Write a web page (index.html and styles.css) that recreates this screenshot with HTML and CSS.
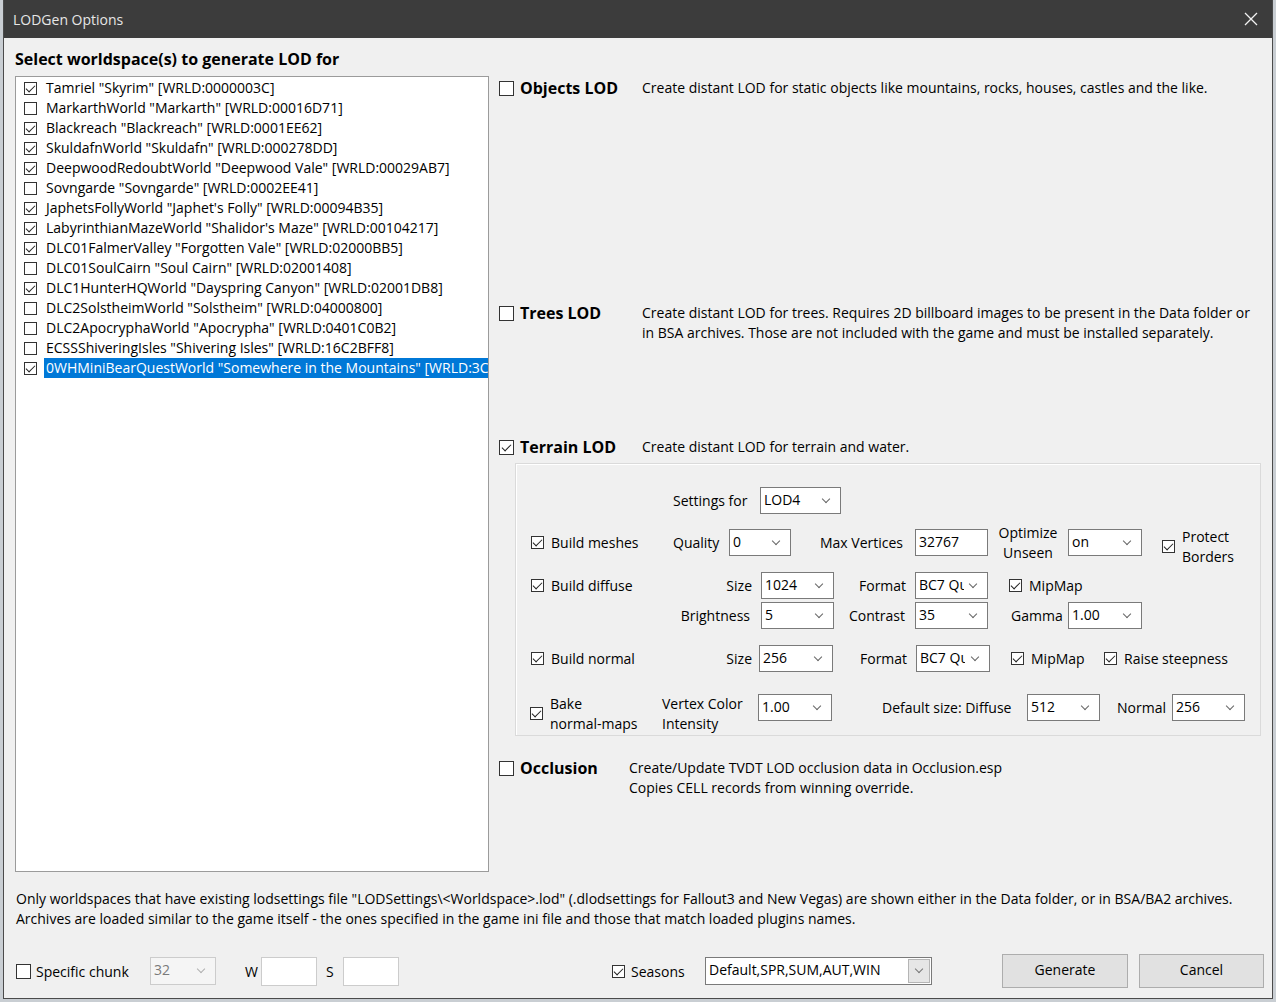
FILE: index.html
```html
<!DOCTYPE html>
<html lang="en">
<head>
    <meta charset="UTF-8">
    <title>LODGen Options</title>
    <link rel="stylesheet" href="styles.css">
</head>
<body>
<div class="window">
    <div class="titlebar">
        <span class="title">LODGen Options</span>
        <svg class="close" width="14" height="14" viewBox="0 0 14 14"><path d="M1 1 L13 13 M13 1 L1 13" stroke="#f2f2f2" stroke-width="1.3"/></svg>
    </div>

    <div class="content">
        <h1 class="heading">Select worldspace(s) to generate LOD for</h1>

        <div class="main">
            <div class="worldlist">
                <div class="item"><span class="cb on"></span><span class="name">Tamriel "Skyrim" [WRLD:0000003C]</span></div>
                <div class="item"><span class="cb"></span><span class="name">MarkarthWorld "Markarth" [WRLD:00016D71]</span></div>
                <div class="item"><span class="cb on"></span><span class="name">Blackreach "Blackreach" [WRLD:0001EE62]</span></div>
                <div class="item"><span class="cb on"></span><span class="name">SkuldafnWorld "Skuldafn" [WRLD:000278DD]</span></div>
                <div class="item"><span class="cb on"></span><span class="name">DeepwoodRedoubtWorld "Deepwood Vale" [WRLD:00029AB7]</span></div>
                <div class="item"><span class="cb"></span><span class="name">Sovngarde "Sovngarde" [WRLD:0002EE41]</span></div>
                <div class="item"><span class="cb on"></span><span class="name">JaphetsFollyWorld "Japhet's Folly" [WRLD:00094B35]</span></div>
                <div class="item"><span class="cb on"></span><span class="name">LabyrinthianMazeWorld "Shalidor's Maze" [WRLD:00104217]</span></div>
                <div class="item"><span class="cb on"></span><span class="name">DLC01FalmerValley "Forgotten Vale" [WRLD:02000BB5]</span></div>
                <div class="item"><span class="cb"></span><span class="name">DLC01SoulCairn "Soul Cairn" [WRLD:02001408]</span></div>
                <div class="item"><span class="cb on"></span><span class="name">DLC1HunterHQWorld "Dayspring Canyon" [WRLD:02001DB8]</span></div>
                <div class="item"><span class="cb"></span><span class="name">DLC2SolstheimWorld "Solstheim" [WRLD:04000800]</span></div>
                <div class="item"><span class="cb"></span><span class="name">DLC2ApocryphaWorld "Apocrypha" [WRLD:0401C0B2]</span></div>
                <div class="item"><span class="cb"></span><span class="name">ECSSShiveringIsles "Shivering Isles" [WRLD:16C2BFF8]</span></div>
                <div class="item"><span class="cb on"></span><span class="name selected">0WHMiniBearQuestWorld "Somewhere in the Mountains" [WRLD:3C000D62]</span></div>
            </div>

            <div class="options">
                <div class="section sec-objects">
                    <span class="cb big"></span>
                    <span class="sec-label">Objects LOD</span>
                    <p class="desc">Create distant LOD for static objects like mountains, rocks, houses, castles and the like.</p>
                </div>

                <div class="section sec-trees">
                    <span class="cb big"></span>
                    <span class="sec-label">Trees LOD</span>
                    <p class="desc">Create distant LOD for trees. Requires 2D billboard images to be present in the Data folder or in BSA archives. Those are not included with the game and must be installed separately.</p>
                </div>

                <div class="section sec-terrain">
                    <span class="cb big on"></span>
                    <span class="sec-label">Terrain LOD</span>
                    <p class="desc">Create distant LOD for terrain and water.</p>
                </div>

                <div class="terrain-panel">
                    <div class="row row0">
                        <span></span>
                        <span class="lbl">Settings for</span>
                        <div class="sel"><span class="val">LOD4</span></div>
                    </div>

                    <div class="row row1">
                        <span></span>
                        <label class="check"><span class="cb on"></span>Build meshes</label>
                        <span class="lbl">Quality</span>
                        <div class="sel"><span class="val">0</span></div>
                        <span></span>
                        <span class="lbl">Max Vertices</span>
                        <div class="field">32767</div>
                        <span class="lbl two center">Optimize<br>Unseen</span>
                        <div class="sel"><span class="val">on</span></div>
                        <span></span>
                        <label class="check lower"><span class="cb on"></span><span class="two">Protect<br>Borders</span></label>
                    </div>

                    <div class="row row2">
                        <span></span>
                        <label class="check"><span class="cb on"></span>Build diffuse</label>
                        <span class="lbl right">Size</span>
                        <div class="sel"><span class="val">1024</span></div>
                        <span></span>
                        <span class="lbl">Format</span>
                        <div class="sel"><span class="val clip">BC7 Quality</span></div>
                        <span></span>
                        <label class="check"><span class="cb on"></span>MipMap</label>
                    </div>

                    <div class="row row3">
                        <span></span>
                        <span></span>
                        <span class="lbl right">Brightness</span>
                        <div class="sel"><span class="val">5</span></div>
                        <span></span>
                        <span class="lbl">Contrast</span>
                        <div class="sel"><span class="val">35</span></div>
                        <span></span>
                        <span class="lbl">Gamma</span>
                        <div class="sel"><span class="val">1.00</span></div>
                    </div>

                    <div class="row row4">
                        <span></span>
                        <label class="check"><span class="cb on"></span>Build normal</label>
                        <span class="lbl right">Size</span>
                        <div class="sel"><span class="val">256</span></div>
                        <span></span>
                        <span class="lbl">Format</span>
                        <div class="sel"><span class="val clip">BC7 Quality</span></div>
                        <span></span>
                        <label class="check"><span class="cb on"></span>MipMap</label>
                        <label class="check"><span class="cb on"></span>Raise steepness</label>
                    </div>

                    <div class="row row5">
                        <span></span>
                        <label class="check low"><span class="cb on"></span><span class="two">Bake<br>normal-maps</span></label>
                        <span class="lbl two low">Vertex Color<br>Intensity</span>
                        <div class="sel"><span class="val">1.00</span></div>
                        <span></span>
                        <span class="lbl">Default size: Diffuse</span>
                        <div class="sel"><span class="val">512</span></div>
                        <span></span>
                        <span class="lbl">Normal</span>
                        <div class="sel"><span class="val">256</span></div>
                    </div>
                </div>

                <div class="section sec-occlusion">
                    <span class="cb big"></span>
                    <span class="sec-label">Occlusion</span>
                    <p class="desc">Create/Update TVDT LOD occlusion data in Occlusion.esp<br>Copies CELL records from winning override.</p>
                </div>
            </div>
        </div>

        <p class="note">Only worldspaces that have existing lodsettings file "LODSettings\&lt;Worldspace&gt;.lod" (.dlodsettings for Fallout3 and New Vegas) are shown either in the Data folder, or in BSA/BA2 archives.<br>Archives are loaded similar to the game itself - the ones specified in the game ini file and those that match loaded plugins names.</p>

        <div class="bottombar">
            <label class="check chunk"><span class="cb big"></span>Specific chunk</label>
            <div class="sel disabled chunk-size"><span class="val">32</span></div>
            <span class="coord">W</span>
            <div class="field light"></div>
            <span class="coord coord-s">S</span>
            <div class="field light"></div>
            <label class="check seasons"><span class="cb on"></span>Seasons</label>
            <div class="combo">
                <span class="val">Default,SPR,SUM,AUT,WIN</span>
                <span class="combo-btn"></span>
            </div>
            <button class="btn generate">Generate</button>
            <button class="btn cancel">Cancel</button>
        </div>
    </div>
</div>
</body>
</html>
```

FILE: styles.css
```css
body {
    margin: 0;
    background: #c9ced3;
    font-family: "Open Sans", "Noto Sans", sans-serif;
    font-size: 14px;
    color: #000;
}

.window {
    margin-left: 3px;
    width: 1270px;
    height: 999px;
    box-sizing: border-box;
    background: #f0f0f0;
    border: 1px solid #4b4b4b;
    border-top: none;
}

.titlebar {
    height: 38px;
    background: #3c3c3c;
    display: flex;
    align-items: center;
    justify-content: space-between;
    padding: 0 14px 0 9px;
}
.title { color: #e6e6e6; font-size: 14px; }

.content { padding: 0 0 0 11px; }

.heading {
    margin: 10px 0 6px;
    font-size: 16px;
    line-height: 22px;
    font-weight: 700;
}

.main { display: flex; gap: 8px; height: 796px; }

/* world list */
.worldlist {
    width: 474px;
    flex: none;
    box-sizing: border-box;
    background: #fff;
    border: 1px solid #9b9b9b;
    padding-top: 1px;
    overflow: hidden;
}
.item { display: flex; align-items: center; height: 20px; }
.item .cb { margin-left: 8px; flex: none; }
.name {
    margin-left: 7px;
    padding-left: 2px;
    flex: 1;
    line-height: 20px;
    white-space: nowrap;
    overflow: hidden;
}
.name.selected { background: #0078d7; color: #fff; }

/* checkboxes */
.cb {
    display: inline-block;
    position: relative;
    width: 13px;
    height: 13px;
    box-sizing: border-box;
    border: 1px solid #333;
    background: #fff;
    flex: none;
}
.cb.big { width: 15px; height: 15px; }
.cb.on::after {
    content: '';
    position: absolute;
    left: 3px;
    top: 0px;
    width: 4px;
    height: 8px;
    border: solid #222;
    border-width: 0 1px 1px 0;
    transform: rotate(45deg);
}
.cb.big.on::after { left: 4px; top: 1px; }

.check { display: flex; align-items: center; gap: 7px; white-space: nowrap; }
.two { line-height: 20px; }

/* right side */
.options { flex: 1; display: flex; flex-direction: column; }

.section { display: flex; align-items: flex-start; }
.section .cb { margin: 5px 6px 0 2px; }
.sec-label {
    width: 122px;
    font-weight: 700;
    font-size: 16px;
    line-height: 24px;
    flex: none;
}
.desc { margin: 2px 0 0; line-height: 20px; padding-right: 10px; }

.sec-trees { margin-top: 201px; }
.sec-terrain { margin-top: 92px; }
.sec-occlusion { margin-top: 20px; }
.sec-occlusion .sec-label { width: 109px; }

.terrain-panel {
    margin: 4px 0 0 18px;
    width: 746px;
    height: 273px;
    box-sizing: border-box;
    border: 1px solid #dadada;
    box-shadow: inset 1px 1px 0 #fff;
    padding-top: 23px;
}

.row { display: grid; grid-template-rows: 27px; height: 27px; align-items: center; }
.row0 { grid-template-columns: 157px 87px 81px; }
.row1 { margin-top: 15px; grid-template-columns: 15px 142px 56px 62px 29px 95px 73px 80px 74px 20px auto; }
.row2 { margin-top: 16px; grid-template-columns: 15px 142px 88px 73px 25px 56px 73px 21px auto; }
.row3 { margin-top: 3px; grid-template-columns: 15px 142px 88px 73px 15px 66px 73px 23px 57px 74px; }
.row4 { margin-top: 16px; grid-template-columns: 15px 142px 86px 74px 27px 56px 74px 21px 93px auto; }
.row5 { margin-top: 22px; grid-template-columns: 14px 132px 96px 74px 50px 145px 73px 17px 55px 73px; }

.lbl { white-space: nowrap; }
.lbl.right { text-align: right; padding-right: 9px; }
.row3 .lbl.right { padding-right: 11px; }
.row4 .lbl.right { padding-right: 7px; }
.lbl.center { text-align: center; }
.low { margin-top: 12px; }
.lower { margin-top: 8px; }

/* controls */
.sel, .field {
    height: 27px;
    box-sizing: border-box;
    background: #fff;
    border: 1px solid #7a7a7a;
    display: flex;
    align-items: center;
    padding-left: 3px;
}
.sel { justify-content: space-between; }
.sel::after {
    content: '';
    width: 5px;
    height: 5px;
    border: solid #666;
    border-width: 0 1px 1px 0;
    transform: rotate(45deg);
    margin: -4px 11px 0 0;
    flex: none;
}
.val { margin-top: -3px; white-space: nowrap; }
.val.clip { width: 45px; overflow: hidden; }
.field { padding-bottom: 3px; }

/* note + bottom */
.note { margin: 17px 0 0 1px; line-height: 20px; }

.bottombar { display: flex; align-items: center; height: 34px; margin-top: 25px; }
.bottombar > * { flex: none; }
.chunk { margin-left: 1px; gap: 5px; width: 134px; }
.chunk-size {
    width: 66px;
    height: 28px;
    background: #f5f5f5;
    border-color: #cccccc;
    color: #7a7a7a;
}
.chunk-size::after { border-color: #b0b0b0; }
.coord { margin-left: 29px; width: 16px; }
.coord-s { margin-left: 9px; width: 17px; }
.field.light { width: 56px; height: 29px; border-color: #cccccc; }

.seasons { margin-left: 213px; gap: 6px; width: 93px; }
.combo {
    width: 227px;
    height: 28px;
    box-sizing: border-box;
    background: #fff;
    border: 1px solid #7a7a7a;
    display: flex;
    align-items: center;
    justify-content: space-between;
    padding: 0 1px 0 3px;
}
.combo-btn {
    width: 22px;
    height: 24px;
    box-sizing: border-box;
    background: #e6e6e6;
    border: 1px solid #b5b5b5;
    display: flex;
    align-items: center;
    justify-content: center;
}
.combo-btn::after {
    content: '';
    width: 5px;
    height: 5px;
    border: solid #777;
    border-width: 0 1px 1px 0;
    transform: rotate(45deg);
    margin-top: -4px;
}

.btn {
    height: 34px;
    background: #e1e1e1;
    border: 1px solid #adadad;
    font-family: inherit;
    font-size: 14px;
    color: #000;
    padding: 0 0 3px;
}
.generate { margin-left: 70px; width: 126px; }
.cancel { margin-left: 11px; width: 125px; }
```
